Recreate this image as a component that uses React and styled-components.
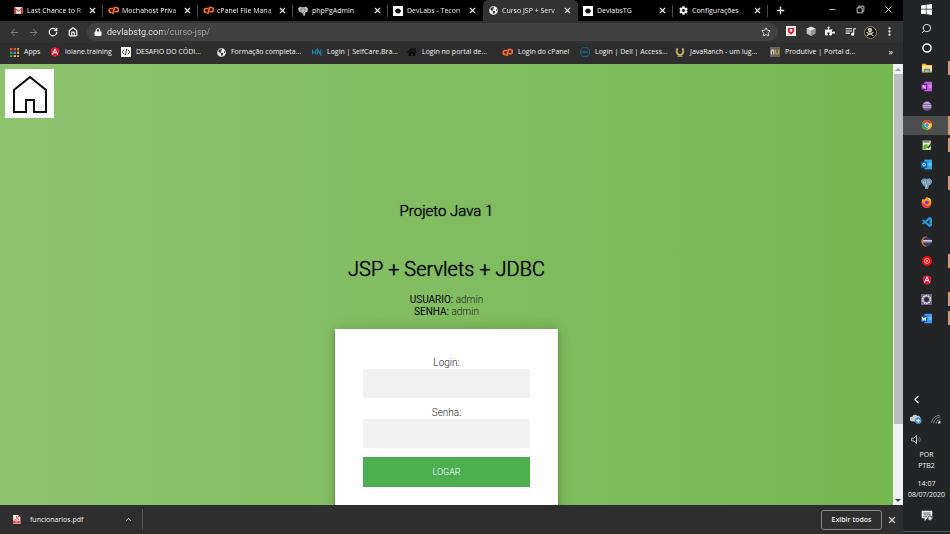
import React from "react";
import styled, { createGlobalStyle } from "styled-components";
import {
  ArrowLeft, ArrowRight, RotateCw, House, Star, X, Plus, Minus, Search,
  ChevronLeft, ChevronUp, MoreVertical,
} from "lucide-react";
import { FaGlobeAmericas, FaPuzzlePiece, FaLock, FaCog, FaSkullCrossbones, FaHome } from "react-icons/fa";
import { SiDell } from "react-icons/si";
import { BiLogoVisualStudio } from "react-icons/bi";
import { MdQueueMusic } from "react-icons/md";

const GlobalStyle = createGlobalStyle`
  *, *::before, *::after { box-sizing: border-box; }
  html, body { margin: 0; padding: 0; background: #222426; }
  body, button, input { font-family: "Open Sans", "Noto Sans", sans-serif; }
  button { padding: 0; border: 0; background: none; color: inherit; cursor: pointer; }
  a { color: inherit; text-decoration: none; }
  svg { display: block; flex: none; }
`;

const Desktop = styled.div`
  display: grid;
  grid-template-columns: minmax(0, 1fr) 47px;
  height: 100vh;
  overflow: hidden;
`;

const Browser = styled.div`
  display: grid;
  grid-template-rows: 21px 22px 21px minmax(0, 1fr) 29px;
  min-width: 0;
  min-height: 0;
  background: #2e2e2e;
  color: #f1f1f1;
  font-size: 8px;
`;

/* ---------- tab strip ---------- */

const TabStrip = styled.div`
  display: flex;
  align-items: stretch;
  padding-left: 8px;
  background: #000;
`;

const Tab = styled.div`
  display: flex;
  align-items: center;
  flex: 0 1 95px;
  min-width: 0;
  padding: 0 6px 0 5px;
  border-radius: ${(p) => (p.$active ? "5px 5px 0 0" : "0")};
  background: ${(p) =>
    p.$active
      ? "#323232"
      : p.$divider
        ? "linear-gradient(#4a4a4a, #4a4a4a) right center / 1px 12px no-repeat"
        : "transparent"};
`;

const TabIcon = styled.span`
  display: flex;
  justify-content: center;
  flex: none;
  width: 10px;
  margin-right: 4px;
`;

const TabTitle = styled.button`
  flex: 1;
  min-width: 0;
  overflow: hidden;
  color: #f1f1f1;
  font-size: 7px;
  line-height: 12px;
  text-align: left;
  white-space: nowrap;
  mask-image: ${(p) => (p.$fade ? "linear-gradient(to right, #000 calc(100% - 12px), #0004)" : "none")};
`;

const IconButton = styled.button`
  display: grid;
  place-items: center;
  flex: none;
  width: ${(p) => p.$w || 10}px;
  height: ${(p) => p.$h || 12}px;
  color: ${(p) => p.$color || "#f1f1f1"};
`;

const WindowControls = styled.div`
  display: flex;
  margin-left: auto;
`;

/* ---------- toolbar ---------- */

const Toolbar = styled.div`
  display: flex;
  align-items: center;
  padding: 0 4px;
  background: #323232;
`;

const NavButtons = styled.div`
  display: flex;
  padding-right: 4px;
`;

const AddressBar = styled.label`
  display: flex;
  align-items: center;
  gap: 5px;
  flex: 1;
  height: 18px;
  padding: 0 7px;
  border-radius: 9px;
  background: #414141;
`;

const AddressInput = styled.input`
  flex: 1;
  min-width: 0;
  padding: 0;
  border: 0;
  outline: 0;
  background: linear-gradient(to right, #f1f1f1 55px, #a5a5a5 55px);
  background-clip: text;
  color: transparent;
  font-family: Roboto, sans-serif;
  font-size: 9px;
  line-height: 14px;
`;

const Extensions = styled.div`
  display: flex;
  padding-left: 3px;
`;

const Avatar = styled.span`
  display: grid;
  place-items: center;
  width: 13px;
  height: 13px;
  border: 1px solid #8d8750;
  border-radius: 50%;
  background: #111;
  color: #e4e1d2;
`;

/* ---------- bookmarks ---------- */

const Bookmarks = styled.nav`
  display: flex;
  align-items: center;
  padding: 0 10px 3px;
  background: #2e2e2e;
`;

const Bookmark = styled.a`
  display: flex;
  align-items: center;
  gap: 5px;
  flex: 0 0 ${(p) => p.$w}px;
  font-size: 7px;
  line-height: 12px;
  white-space: nowrap;
`;

const More = styled.button`
  margin-left: auto;
  font-size: 9px;
  line-height: 12px;
`;

/* ---------- page ---------- */

const Viewport = styled.div`
  display: grid;
  grid-template-columns: minmax(0, 1fr) 10px;
  min-height: 0;
`;

const Page = styled.main`
  display: flex;
  flex-direction: column;
  align-items: center;
  min-height: 0;
  overflow: hidden;
  padding: 5px;
  background: linear-gradient(to left, #76b852, #8dc26f);
  color: #000;
  font-family: Roboto, sans-serif;
  font-weight: 300;
`;

const HomeLink = styled.a`
  display: grid;
  place-items: center;
  align-self: flex-start;
  flex: none;
  width: 49px;
  height: 49px;
  background: #fdfdfd;
`;

const Subject = styled.h2`
  margin: 83px 0 0;
  font-size: 15px;
  font-weight: 300;
  line-height: 20px;
  text-shadow: 0 0 1px #000;
`;

const Title = styled.h1`
  margin: 35px 0 0;
  font-size: 20px;
  font-weight: 300;
  line-height: 26px;
  text-shadow: 0 0 1px #000;
`;

const Credentials = styled.p`
  margin: 12px 0 11px;
  color: #222;
  font-size: 10px;
  line-height: 12px;
  text-align: center;
  & b { color: #000; font-weight: 400; }
`;

const LoginCard = styled.form`
  display: flex;
  flex-direction: column;
  flex: none;
  width: 223px;
  padding: 28px 28px 36px;
  background: #fff;
  box-shadow: 0 0 12px rgba(0, 0, 0, 0.2), 0 3px 3px rgba(0, 0, 0, 0.24);
`;

const Field = styled.label`
  display: flex;
  flex-direction: column;
  margin-bottom: 9px;
  color: #222;
  font-size: 10px;
  line-height: 12px;
  text-align: center;
`;

const FieldInput = styled.input`
  width: 100%;
  height: 29px;
  padding: 0 9px;
  border: 0;
  outline: 0;
  background: #f2f2f2;
  font-family: Roboto, sans-serif;
  font-size: 10px;
`;

const Submit = styled.button`
  height: 30px;
  background: #4caf50;
  color: #fff;
  font-family: Roboto, sans-serif;
  font-size: 9px;
  font-weight: 300;
`;

const Scrollbar = styled.div`
  display: grid;
  grid-template-rows: 10px minmax(0, 350fr) minmax(0, 71fr) 10px;
  background: #f1f1f1;
`;

const ScrollArrow = styled.div`
  display: grid;
  place-items: center;
  color: ${(p) => p.$color};
`;

const ScrollThumb = styled.div`
  margin-left: 1px;
  background: #bdbdbd;
`;

/* ---------- download shelf ---------- */

const Shelf = styled.footer`
  display: flex;
  align-items: center;
  padding: 0 6px 0 12px;
  background: #2e2e2e;
`;

const Download = styled.div`
  display: flex;
  align-items: center;
  justify-content: space-between;
  width: 131px;
  height: 21px;
  padding-right: 9px;
  border-right: 1px solid #565656;
`;

const DownloadFile = styled.button`
  display: flex;
  align-items: center;
  gap: 9px;
  font-size: 7px;
`;

const ShowAll = styled.button`
  width: 61px;
  height: 20px;
  margin-left: auto;
  margin-right: 5px;
  border: 1px solid #8a8a8a;
  border-radius: 3px;
  font-size: 7px;
  font-weight: 600;
`;

/* ---------- taskbar ---------- */

const Taskbar = styled.aside`
  display: flex;
  flex-direction: column;
  min-height: 0;
  background: #222426;
  color: #f1f1f1;
  font-size: 7px;
`;

const Pinned = styled.div`
  display: flex;
  flex-direction: column;
  height: 328px;
`;

const PinnedApp = styled.button`
  display: grid;
  place-items: center;
  flex: 1;
  background:
    ${(p) => p.$open && `linear-gradient(#d59b74, #d59b74) right center / 2px ${p.$active ? "100%" : "14px"} no-repeat,`}
    linear-gradient(${(p) => (p.$active ? "#4b4d4e, #4b4d4e" : "transparent, transparent")});
`;

const Tray = styled.div`
  display: grid;
  grid-template-columns: 20px 20px;
  grid-auto-rows: 20px;
  margin-top: auto;
  padding-left: 3px;
`;

const TrayButton = styled(IconButton)`
  width: 20px;
  height: 20px;
`;

const TrayText = styled.div`
  padding-top: ${(p) => p.$pad || 0}px;
  line-height: 11px;
  text-align: center;
`;

const Notifications = styled.button`
  display: grid;
  place-items: center;
  height: 32px;
  margin-bottom: 2px;
  border-bottom: 1px solid #58595b;
`;

/* ---------- drawings ---------- */

const Svg = ({ s = 10, box = 16, children }) => (
  <svg width={s} height={s} viewBox={`0 0 ${box} ${box}`} fill="none" aria-hidden="true">{children}</svg>
);

const Gmail = () => (
  <Svg s={9}>
    <path d="M1 2h14v12H1z" fill="#f4f4f4" />
    <path d="M1 14V2l7 6 7-6v12h-3V7l-4 3-4-3v7z" fill="#d93a2f" />
  </Svg>
);
const CPanel = () => (
  <Svg s={11} box={22}>
    <path d="M10 7H6.500a4 4 0 0 0 0 8H8" stroke="#ff6c2c" strokeWidth="3.4" />
    <path d="M9.500 18l3.500-13h3.500a4 4 0 0 1 0 8.500H13" stroke="#ff6c2c" strokeWidth="3.400" />
  </Svg>
);
const Elephant = () => (
  <Svg>
    <path d="M0 4l3-3 3 1h4l3-1 3 3-1 5-3 1-1 5H8l-1-4-3-1-3-2z" fill="#c4c6c8" />
    <path d="M5 3v5l2 1M11 3v5l-2 2v4M8 3v3" stroke="#505457" />
  </Svg>
);
const DevLabs = () => (
  <Svg>
    <path d="M0 0h16v16H0z" fill="#fff" />
    <circle cx="8" cy="8" r="4" fill="#111" />
    <path d="M3 8h10" stroke="#111" strokeWidth="2" />
  </Svg>
);
const Globe = () => <FaGlobeAmericas size={9} color="#f1f1f1" />;
const AppsGrid = () => (
  <Svg s={9} box={15}>
    {["#e94335", "#e94335", "#f29a35", "#33a853", "#4285f4", "#f2b735", "#33a853", "#f2b735", "#f2b735"].map((c, i) => (
      <rect key={i} x={(i % 3) * 6} y={Math.floor(i / 3) * 6} width="4" height="4" fill={c} />
    ))}
  </Svg>
);
const AngularShield = () => (
  <Svg s={10}>
    <path d="M8 0l7 3-1 10-6 3-6-3L1 3z" fill="#dd1b36" />
    <path d="M4 12l4-9 4 9M6 9h4" stroke="#fff" strokeWidth="1.6" />
  </Svg>
);
const CodeTile = () => (
  <Svg s={10}>
    <path d="M0 0h16v16H0z" fill="#f5f5f5" />
    <path d="M5 4L2 8l3 4M11 4l3 4-3 4M9 3L7 13" stroke="#222" strokeWidth="1.4" />
  </Svg>
);
const Hn = () => (
  <Svg>
    <path d="M1 4v8M6 4v8M1 8h5M9 12V4l5 8V4" stroke="#2382a8" strokeWidth="2" />
  </Svg>
);
const Shoe = () => (
  <Svg>
    <path d="M4 2C1 6 3 13 8 13s7-7 4-11" stroke="#a89c4c" strokeWidth="3" />
    <path d="M4 3c-2 4 0 9 4 9s6-5 4-9M4 15h8" stroke="#e4dfae" strokeWidth="1" />
  </Svg>
);
const Produtive = () => (
  <Svg>
    <path d="M0 0h16v16H0z" fill="#66645f" />
    <path d="M2 12V5h4v7" stroke="#eee" strokeWidth="1.6" />
    <path d="M9 4v7h5V4" stroke="#d6a51e" strokeWidth="1.6" />
  </Svg>
);
const Restore = () => (
  <Svg s={9}><path d="M2 5h9v9H2zM5 5V2h9v9h-3" stroke="#eee" strokeWidth="1.4" /></Svg>
);
const Shield = () => (
  <Svg>
    <path d="M0 0h16v16H0z" fill="#f3eded" />
    <path d="M3 3h10v6l-5 5-5-5z" fill="#c8243a" />
    <path d="M6 5h4v4H6z" fill="#fff" />
  </Svg>
);
const Cube = () => (
  <Svg>
    <path d="M8 1l7 3v8l-7 4-7-4V4z" fill="#bfbfbf" />
    <path d="M1 4l7 3 7-3-7-3z" fill="#e4e4e4" />
    <path d="M8 7l7-3v8l-7 4z" fill="#959595" />
  </Svg>
);
const HouseDrawing = () => (
  <svg width="36" height="40" viewBox="0 0 36 40" fill="none" aria-hidden="true">
    <path d="M2 38V16L18 3l16 13v22H22V26h-8v12z" stroke="#0b0b0b" strokeWidth="2" />
  </svg>
);
const Pdf = () => (
  <Svg s={9}>
    <path d="M2 0h9l4 4v12H2z" fill="#f8e9e7" />
    <path d="M2 10h12v5H2zM11 0l4 4h-4z" fill="#d7382d" />
    <path d="M4 9c4-1 5-4 4-7 0 3 2 6 5 6" stroke="#d7382d" strokeWidth="1.3" />
    <path d="M5 12.500h6" stroke="#fff" />
  </Svg>
);
const Windows = () => (
  <Svg s={11}><path d="M0 2l7-1v6H0zM8 1l8-1v7H8zM0 8h7v7l-7-1zM8 8h8v8l-8-1z" fill="#fff" /></Svg>
);
const Ring = () => <Svg s={10}><circle cx="8" cy="8" r="6.5" stroke="#f5f5f5" strokeWidth="2.4" /></Svg>;
const Folder = () => (
  <Svg s={10}>
    <path d="M0 1h6l2 2h8v12H0z" fill="#f0b429" />
    <path d="M0 4h16v9H0z" fill="#ffe07a" />
    <path d="M3 9h10v6h-2v-3H5v3H3z" fill="#2d91d8" />
  </Svg>
);
const OfficeTile = ({ front, back, d }) => (
  <Svg s={11}>
    <path d="M5 1h11v14H5z" fill={back} />
    <path d="M11 5h5v5h-5z" fill="#fff" opacity="0.25" />
    <path d="M0 4h9v9H0z" fill={front} />
    <path d={d} stroke="#fff" strokeWidth="1.4" />
  </Svg>
);
const EclipseBall = () => (
  <Svg s={10}>
    <circle cx="8" cy="8" r="7.5" fill="#765a9c" />
    <path d="M2 5c3-5 9-5 12 0z" fill="#b9a6d2" />
    <path d="M1 7.500h14M1 10h14" stroke="#e7e0f0" strokeWidth="1.2" />
  </Svg>
);
const Chrome = () => (
  <Svg s={10} box={20}>
    <circle cx="10" cy="10" r="10" fill="#fbc116" />
    <path d="M10 10L1.3 5A10 10 0 0 1 18.700 5z" fill="#e33b2e" />
    <path d="M10 10L1.300 5A10 10 0 0 0 10 20l4-8z" fill="#2da94f" />
    <circle cx="10" cy="10" r="5" fill="#fff" />
    <circle cx="10" cy="10" r="3.800" fill="#4285f4" />
  </Svg>
);
const Notepad = () => (
  <Svg s={10}>
    <path d="M1 1h13v15H1z" fill="#e6ead9" />
    <path d="M2 3h10" stroke="#65695e" strokeWidth="2" />
    <path d="M2 9l5-3 3 3-4 6H2z" fill="#69b52d" />
    <path d="M8 12l6-7 2 2-6 7z" fill="#355a1c" />
  </Svg>
);
const BlueElephant = () => (
  <Svg s={11}>
    <path d="M1 3l4-2 3 1 4-1 3 2v4l-2 3h-2l-1 5-3 1-1-5H4L1 6z" fill="#5f8fb4" stroke="#c3d5e2" strokeWidth="0.8" />
    <path d="M6 3v5l1 2M10 3v5l-2 2v4M3 4l1 4M13 4l-1 4" stroke="#dce7ef" strokeWidth="0.9" />
  </Svg>
);
const Firefox = () => (
  <Svg s={11}>
    <path d="M8 16a7.500 7.500 0 0 1-7-8c0-3 1-5 2-6l1 2 2-1 2-3 2 3 3-1c4 5 2 14-5 14z" fill="#ff9a1f" />
    <path d="M1 8a7 7 0 0 0 7 8c5 0 7-4 7-7-2 4-7 5-10 1z" fill="#f0334c" />
    <circle cx="8.500" cy="8" r="3" fill="#7a3fc4" />
    <path d="M8 0l3 4 4 2-2-4z" fill="#ffdc3e" />
  </Svg>
);
const Eclipse = () => (
  <Svg s={11}>
    <path d="M8 1a7 7 0 0 0 0 14 9 9 0 0 1 0-14z" fill="#e88a2b" stroke="#e88a2b" />
    <circle cx="9" cy="8" r="6.500" fill="#3d3768" />
    <path d="M3 6.500h13M3 8.500h13" stroke="#dcdae9" strokeWidth="1.400" />
  </Svg>
);
const MusicDisc = () => (
  <Svg s={10}>
    <circle cx="8" cy="8" r="8" fill="#f20d0d" />
    <circle cx="8" cy="8" r="4" stroke="#fff" strokeWidth="1" />
    <path d="M7 6l3 2-3 2z" fill="#fff" />
  </Svg>
);
const GearTile = () => (
  <Svg s={11}>
    <path d="M0 0h16v16H0z" fill="#746486" />
    <circle cx="8" cy="8" r="5.500" stroke="#e8e8e8" strokeWidth="2.500" strokeDasharray="2.400 1" />
    <circle cx="8" cy="8" r="4.500" fill="#2d2935" stroke="#ddd" />
  </Svg>
);
const CloudSync = () => (
  <Svg s={12}>
    <path d="M2 11a3 3 0 0 1 1-6 4 4 0 0 1 7-1 3 3 0 0 1 3 5v3z" fill="#c8cbcd" />
    <circle cx="11" cy="10" r="4.500" fill="#3b9ade" />
    <path d="M8.500 10h5M11 7.500v5" stroke="#fff" strokeWidth="1.600" />
  </Svg>
);
const WifiTilted = () => (
  <Svg s={10}>
    <path d="M1 14A13 13 0 0 1 14 2M4 15A11 11 0 0 1 15 5M8 15a7 7 0 0 1 7-6" stroke="#9a9b9c" strokeWidth="1.2" />
    <path d="M11 15a4 4 0 0 1 4-4v4z" fill="#e0e0e0" />
  </Svg>
);
const Speaker = () => (
  <Svg s={11}>
    <path d="M1 6h3l4-4v12l-4-4H1z" stroke="#dedede" strokeWidth="1.2" />
    <path d="M10 6q1 2 0 4M12 4q3 4 0 8" stroke="#888" strokeWidth="1.1" />
  </Svg>
);
const Note = () => (
  <Svg s={12}>
    <path d="M1 1h14v10H8l-3 4v-4H1z" fill="#f5f5f5" />
    <path d="M3 4h10M3 6.500h10M3 9h5" stroke="#333" />
    <circle cx="12" cy="11" r="3" fill="#d8d8d8" stroke="#333" />
  </Svg>
);
const Triangle = ({ up }) => <Svg s={6} box={6}><path d={up ? "M0 5l3-3 3 3z" : "M0 2h6L3 5z"} fill="currentColor" /></Svg>;

/* ---------- data ---------- */

const tabs = [
  { title: "Last Chance to R", icon: <Gmail />, divider: true, fade: true },
  { title: "Mochahost Priva", icon: <CPanel />, divider: true, fade: true },
  { title: "cPanel File Mana", icon: <CPanel />, divider: true, fade: true },
  { title: "phpPgAdmin", icon: <Elephant />, divider: true },
  { title: "DevLabs - Tecon", icon: <DevLabs />, fade: true },
  { title: "Curso JSP + Serv", icon: <Globe />, active: true, fade: true },
  { title: "DevlabsTG", icon: <DevLabs />, divider: true },
  { title: "Configurações", icon: <FaCog size={9} />, divider: true },
];

const bookmarks = [
  { text: "Apps", w: 40, icon: <AppsGrid /> },
  { text: "loiane.training", w: 71, icon: <AngularShield /> },
  { text: "DESAFIO DO CÓDI...", w: 96, icon: <CodeTile /> },
  { text: "Formação completa...", w: 95, icon: <Globe /> },
  { text: "Login | SelfCare.Bra...", w: 95, icon: <Hn /> },
  { text: "Login no portal de...", w: 95, icon: <FaHome size={10} color="#080808" /> },
  { text: "Login do cPanel", w: 78, icon: <CPanel /> },
  { text: "Login | Dell | Access...", w: 95, icon: <SiDell size={10} color="#087db5" /> },
  { text: "JavaRanch - um lug...", w: 95, icon: <Shoe /> },
  { text: "Produtive | Portal d...", w: 95, icon: <Produtive /> },
];

const apps = [
  { name: "Iniciar", icon: <Windows /> },
  { name: "Pesquisar", icon: <Search size={11} strokeWidth={2} transform="scale(-1 1)" /> },
  { name: "Cortana", icon: <Ring /> },
  { name: "Explorador", icon: <Folder />, open: true },
  { name: "OneNote", icon: <OfficeTile front="#7719aa" back="#c45ee0" d="M3 11V6l3 5V6" /> },
  { name: "Eclipse Installer", icon: <EclipseBall /> },
  { name: "Chrome", icon: <Chrome />, open: true, active: true },
  { name: "Notepad++", icon: <Notepad />, open: true },
  { name: "Outlook", icon: <OfficeTile front="#0b65b5" back="#31a8e8" d="M4.500 6.200a2 2 0 1 0 .1 0z" /> },
  { name: "pgAdmin", icon: <BlueElephant />, open: true },
  { name: "Firefox", icon: <Firefox /> },
  { name: "VS Code", icon: <BiLogoVisualStudio size={12} color="#2299dd" /> },
  { name: "Eclipse", icon: <Eclipse /> },
  { name: "YouTube Music", icon: <MusicDisc />, open: true },
  { name: "Angular", icon: <AngularShield /> },
  { name: "Spring Tools", icon: <GearTile />, open: true },
  { name: "Word", icon: <OfficeTile front="#185abd" back="#3e9be8" d="M2 6l1 5 1.500-4L6 11l1-5" />, open: true },
];

export default function App() {
  return (
    <>
      <GlobalStyle />
      <Desktop>
        <Browser>
          <TabStrip role="tablist">
            {tabs.map((t) => (
              <Tab key={t.title} $active={t.active} $divider={t.divider}>
                <TabIcon>{t.icon}</TabIcon>
                <TabTitle role="tab" aria-selected={!!t.active} $fade={t.fade}>{t.title}</TabTitle>
                <IconButton $w={9} aria-label="Fechar guia"><X size={9} strokeWidth={3} /></IconButton>
              </Tab>
            ))}
            <IconButton $w={24} $h={21} aria-label="Nova guia"><Plus size={11} strokeWidth={3} /></IconButton>
            <WindowControls>
              <IconButton $w={28} $h={18} aria-label="Minimizar"><Minus size={9} strokeWidth={2} /></IconButton>
              <IconButton $w={28} $h={18} aria-label="Restaurar"><Restore /></IconButton>
              <IconButton $w={29} $h={18} aria-label="Fechar"><X size={11} strokeWidth={2} /></IconButton>
            </WindowControls>
          </TabStrip>

          <Toolbar>
            <NavButtons>
              <IconButton $w={20} $color="#858585" aria-label="Voltar"><ArrowLeft size={11} /></IconButton>
              <IconButton $w={19} $color="#858585" aria-label="Avançar"><ArrowRight size={11} /></IconButton>
              <IconButton $w={20} aria-label="Recarregar"><RotateCw size={10} strokeWidth={3} /></IconButton>
              <IconButton $w={20} aria-label="Página inicial"><House size={10} strokeWidth={3} /></IconButton>
            </NavButtons>
            <AddressBar>
              <FaLock size={8} />
              <AddressInput aria-label="Endereço" defaultValue="devlabstg.com/curso-jsp/" />
              <IconButton aria-label="Favoritar"><Star size={10} /></IconButton>
            </AddressBar>
            <Extensions>
              <IconButton $w={20} aria-label="Proteção"><Shield /></IconButton>
              <IconButton $w={19} aria-label="Extensão"><Cube /></IconButton>
              <IconButton $w={20} aria-label="Extensões"><FaPuzzlePiece size={10} /></IconButton>
              <IconButton $w={20} aria-label="Mídia"><MdQueueMusic size={13} /></IconButton>
              <IconButton $w={20} $h={14} aria-label="Perfil"><Avatar><FaSkullCrossbones size={8} /></Avatar></IconButton>
              <IconButton $w={19} aria-label="Menu"><MoreVertical size={11} strokeWidth={3} /></IconButton>
            </Extensions>
          </Toolbar>

          <Bookmarks>
            {bookmarks.map((b) => (
              <Bookmark key={b.text} href="#" $w={b.w}>{b.icon}{b.text}</Bookmark>
            ))}
            <More aria-label="Mais favoritos">»</More>
          </Bookmarks>

          <Viewport>
            <Page>
              <HomeLink href="#" aria-label="Início"><HouseDrawing /></HomeLink>
              <Subject>Projeto Java 1</Subject>
              <Title>JSP + Servlets + JDBC</Title>
              <Credentials>
                <b>USUARIO:</b> admin<br />
                <b>SENHA:</b> admin
              </Credentials>
              <LoginCard onSubmit={(e) => e.preventDefault()}>
                <Field>Login:<FieldInput type="text" name="login" /></Field>
                <Field>Senha:<FieldInput type="password" name="senha" /></Field>
                <Submit type="submit">LOGAR</Submit>
              </LoginCard>
            </Page>
            <Scrollbar>
              <ScrollArrow $color="#a3a3a3"><Triangle up /></ScrollArrow>
              <ScrollThumb />
              <div />
              <ScrollArrow $color="#404040"><Triangle /></ScrollArrow>
            </Scrollbar>
          </Viewport>

          <Shelf>
            <Download>
              <DownloadFile><Pdf />funcionarios.pdf</DownloadFile>
              <IconButton aria-label="Opções do download"><ChevronUp size={9} strokeWidth={2} /></IconButton>
            </Download>
            <ShowAll>Exibir todos</ShowAll>
            <IconButton $color="#d0d0d0" aria-label="Fechar downloads"><X size={10} strokeWidth={3} /></IconButton>
          </Shelf>
        </Browser>

        <Taskbar>
          <Pinned>
            {apps.map((a) => (
              <PinnedApp key={a.name} aria-label={a.name} $open={a.open} $active={a.active}>{a.icon}</PinnedApp>
            ))}
          </Pinned>
          <Tray>
            <TrayButton aria-label="Mostrar ícones ocultos"><ChevronLeft size={13} strokeWidth={2} /></TrayButton>
            <span />
            <TrayButton aria-label="Nuvem"><CloudSync /></TrayButton>
            <TrayButton aria-label="Rede"><WifiTilted /></TrayButton>
            <TrayButton aria-label="Volume"><Speaker /></TrayButton>
          </Tray>
          <TrayText>POR<br />PTB2</TrayText>
          <TrayText $pad={7}>14:07<br />08/07/2020</TrayText>
          <Notifications aria-label="Notificações"><Note /></Notifications>
        </Taskbar>
      </Desktop>
    </>
  );
}
